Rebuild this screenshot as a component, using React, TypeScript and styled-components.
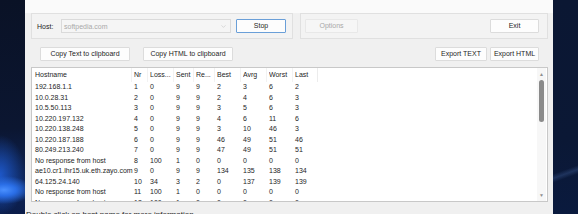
import styled, { createGlobalStyle } from 'styled-components';
import { ChevronDown } from 'lucide-react';

const GlobalStyle = createGlobalStyle`
  html, body {
    margin: 0;
    padding: 0;
  }
  body {
    width: 578px;
    height: 214px;
    overflow: hidden;
    background: #0b1732;
    font-family: 'Liberation Sans', Arial, sans-serif;
  }
`;

const Desktop = styled.div`
  display: flex;
  width: 578px;
  height: 214px;
  overflow: hidden;
`;

const LeftWall = styled.div`
  flex: 0 0 25px;
  background:
    radial-gradient(ellipse 30px 14px at 4px 190px, #4a90ff 0%, #2a6ee6 40%, rgba(30, 80, 200, 0) 100%),
    radial-gradient(ellipse 26px 40px at 0px 175px, #1d57c8 0%, rgba(20, 60, 170, 0) 100%),
    linear-gradient(180deg, #0a1226 0%, #0b1631 60%, #0e2456 85%, #0b1d4a 100%);
`;

const RightWall = styled.div`
  flex: 1;
  background:
    linear-gradient(160deg, rgba(0, 0, 0, 0) 78%, rgba(90, 130, 200, 0.25) 80%, rgba(0, 0, 0, 0) 82%),
    linear-gradient(180deg, #0b1733 0%, #0b1835 65%, #0a1a3e 100%);
`;

const Window = styled.div`
  flex: 0 0 528px;
  display: flex;
  flex-direction: column;
  background: #f0f0f0;
  overflow: hidden;
`;

const TitleStrip = styled.div`
  height: 13px;
  flex: none;
  background: #fafafa;
`;

const Body = styled.div`
  flex: none;
  display: flex;
  flex-direction: column;
  padding: 0 5px 0 6px;
`;

const HostBar = styled.div`
  display: flex;
  gap: 7px;
  height: 27px;
  flex: none;
`;

const GroupBox = styled.div<{ $width?: number }>`
  ${p => (p.$width ? `flex: 0 0 ${p.$width}px;` : 'flex: 1;')}
  height: 26px;
  box-sizing: border-box;
  border: 1px solid #e0e0e0;
  background: #f3f3f3;
  display: flex;
  align-items: center;
`;

const HostGroup = styled(GroupBox)`
  padding: 0 0 0 5px;
`;

const ControlGroup = styled(GroupBox)`
  padding: 0 8px 0 4px;
  justify-content: space-between;
`;

const Label = styled.span`
  font-size: 7px;
  color: #1e1e1e;
  width: 24px;
`;

const Combo = styled.div`
  width: 170px;
  height: 14px;
  box-sizing: border-box;
  border: 1px solid #dadada;
  background: #f5f5f5;
  display: flex;
  align-items: center;
  justify-content: space-between;
  padding: 0 3px 0 2px;
  margin-right: 5px;
  font-size: 7px;
  color: #a9a9a9;
`;

const Button = styled.button<{ $width: number; $variant?: 'default' | 'focused' | 'disabled' }>`
  width: ${p => p.$width}px;
  height: 14px;
  box-sizing: border-box;
  padding: 0;
  margin: 0;
  font-family: inherit;
  font-size: 7px;
  line-height: 12px;
  background: ${p => (p.$variant === 'disabled' ? '#f6f6f6' : '#fdfdfd')};
  color: ${p => (p.$variant === 'disabled' ? '#a8a8a8' : '#1e1e1e')};
  border: 1px solid
    ${p => (p.$variant === 'focused' ? '#6a9fd8' : p.$variant === 'disabled' ? '#e8e8e8' : '#dcdcdc')};
  border-radius: 1px;
`;

const ActionRow = styled.div`
  display: flex;
  align-items: center;
  height: 27px;
  flex: none;
  padding: 0 9px;
  gap: 13px;
`;

const ExportGroup = styled.div`
  margin-left: auto;
  display: flex;
  gap: 3px;
`;

const ListView = styled.div`
  height: 135px;
  flex: none;
  box-sizing: border-box;
  border: 1px solid #c8c8c8;
  background: #ffffff;
  display: flex;
  overflow: hidden;
`;

const ListContent = styled.div`
  flex: 1;
  overflow: hidden;
`;

const columns = '99px 16px 26px 20px 21px 26px 26px 26px 1fr';

const HeaderRow = styled.div`
  display: grid;
  grid-template-columns: ${columns};
  height: 14px;
  align-items: center;
  padding-left: 3px;
  font-size: 7px;
  color: #1e1e1e;
`;

const HeaderCell = styled.span<{ $last?: boolean }>`
  height: 14px;
  line-height: 14px;
  white-space: nowrap;
  overflow: hidden;
  margin-right: ${p => (p.$last ? '0' : '2px')};
  box-shadow: inset -1px 0 0 ${p => (p.$last ? '#ececec' : '#f2f2f2')};
  ${p => (p.$last ? 'max-width: 23px;' : '')}
`;

const Row = styled.div`
  display: grid;
  grid-template-columns: ${columns};
  height: 10.5px;
  line-height: 10.5px;
  padding-left: 3px;
  font-size: 7px;
  color: #1e1e1e;
  white-space: nowrap;
`;

const Scrollbar = styled.div`
  flex: 0 0 9px;
  display: flex;
  flex-direction: column;
  align-items: center;
  background: #f7f7f7;
  margin-right: 1px;
`;

const Arrow = styled.span`
  font-size: 5px;
  color: #8f8f8f;
  height: 12px;
  line-height: 12px;
`;

const Thumb = styled.div`
  width: 5px;
  height: 42px;
  border-radius: 3px;
  background: #8a8a8a;
`;

const Track = styled.div`
  flex: 1;
`;

const StatusBar = styled.div`
  flex: none;
  padding: 8px 0 0 1px;
  font-size: 8px;
  line-height: 10px;
  color: #1e1e1e;
  white-space: nowrap;
`;

const headers = ['Hostname', 'Nr', 'Loss...', 'Sent', 'Re...', 'Best', 'Avrg', 'Worst', 'Last'];

const rows: string[][] = [
  ['192.168.1.1', '1', '0', '9', '9', '2', '3', '6', '2'],
  ['10.0.28.31', '2', '0', '9', '9', '2', '4', '6', '3'],
  ['10.5.50.113', '3', '0', '9', '9', '3', '5', '6', '3'],
  ['10.220.197.132', '4', '0', '9', '9', '4', '6', '11', '6'],
  ['10.220.138.248', '5', '0', '9', '9', '3', '10', '46', '3'],
  ['10.220.187.188', '6', '0', '9', '9', '46', '49', '51', '46'],
  ['80.249.213.240', '7', '0', '9', '9', '47', '49', '51', '51'],
  ['No response from host', '8', '100', '1', '0', '0', '0', '0', '0'],
  ['ae10.cr1.lhr15.uk.eth.zayo.com', '9', '0', '9', '9', '134', '135', '138', '134'],
  ['64.125.24.140', '10', '34', '3', '2', '0', '137', '139', '139'],
  ['No response from host', '11', '100', '1', '0', '0', '0', '0', '0'],
  ['No response from host', '12', '100', '1', '0', '0', '0', '0', '0'],
];

export default function App() {
  return (
    <>
      <GlobalStyle />
      <Desktop>
        <LeftWall />
        <Window>
          <TitleStrip />
          <Body>
            <HostBar>
              <HostGroup $width={262}>
                <Label>Host:</Label>
                <Combo>
                  <span>softpedia.com</span>
                  <ChevronDown size={7} color="#b4b4b4" strokeWidth={1.5} />
                </Combo>
                <Button $width={50} $variant="focused">Stop</Button>
              </HostGroup>
              <ControlGroup>
                <Button $width={53} $variant="disabled">Options</Button>
                <Button $width={49}>Exit</Button>
              </ControlGroup>
            </HostBar>
            <ActionRow>
              <Button $width={90}>Copy Text to clipboard</Button>
              <Button $width={90}>Copy HTML to clipboard</Button>
              <ExportGroup>
                <Button $width={52}>Export TEXT</Button>
                <Button $width={49}>Export HTML</Button>
              </ExportGroup>
            </ActionRow>
            <ListView>
              <ListContent>
                <HeaderRow>
                  {headers.map((h, i) => (
                    <HeaderCell key={h} $last={i === headers.length - 1}>{h}</HeaderCell>
                  ))}
                </HeaderRow>
                {rows.map((r, i) => (
                  <Row key={i}>
                    {r.map((c, j) => (
                      <span key={j}>{c}</span>
                    ))}
                  </Row>
                ))}
              </ListContent>
              <Scrollbar>
                <Arrow>▲</Arrow>
                <Thumb />
                <Track />
                <Arrow>▼</Arrow>
              </Scrollbar>
            </ListView>
          </Body>
          <StatusBar>Double click on host name for more information.</StatusBar>
        </Window>
        <RightWall />
      </Desktop>
    </>
  );
}
